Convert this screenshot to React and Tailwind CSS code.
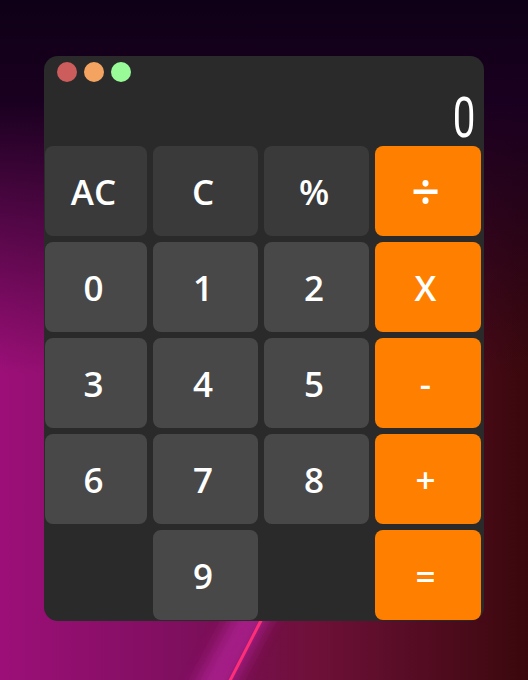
import React from 'react';

const keys = [
  { label: 'AC', kind: 'fn' },
  { label: 'C', kind: 'fn' },
  { label: '%', kind: 'fn' },
  { label: '÷', kind: 'op', big: true },
  { label: '0', kind: 'num' },
  { label: '1', kind: 'num' },
  { label: '2', kind: 'num' },
  { label: 'X', kind: 'op' },
  { label: '3', kind: 'num' },
  { label: '4', kind: 'num' },
  { label: '5', kind: 'num' },
  { label: '-', kind: 'op' },
  { label: '6', kind: 'num' },
  { label: '7', kind: 'num' },
  { label: '8', kind: 'num' },
  { label: '+', kind: 'op' },
  { label: '', kind: 'empty' },
  { label: '9', kind: 'num' },
  { label: '', kind: 'empty' },
  { label: '=', kind: 'op' },
];

const keyStyles = {
  fn: 'bg-[#3a3a3a] rounded-[8px]',
  num: 'bg-[#484848] rounded-[8px]',
  op: 'bg-[#ff8000] rounded-[8px]',
  empty: '',
};

const Key = ({ label, kind, big }) => {
  if (kind === 'empty') return <div />;
  return (
    <button
      className={`${keyStyles[kind]} ${big ? 'text-[50px]' : 'text-[35px]'} flex items-center justify-center pr-[5px] text-white font-semibold leading-none`}
    >
      {label}
    </button>
  );
};

const Swoosh = () => (
  <svg className="absolute left-0 top-0" width="528" height="680" viewBox="0 0 528 680">
    <defs>
      <filter id="blur" x="-50%" y="-50%" width="200%" height="200%">
        <feGaussianBlur stdDeviation="8" />
      </filter>
    </defs>
    <path d="M 288 545 Q 252 615 206 700" stroke="#b4229a" strokeWidth="34" fill="none" opacity="0.75" filter="url(#blur)" />
    <path d="M 300 545 Q 264 615 220 700" stroke="#ff2e78" strokeWidth="3" fill="none" />
  </svg>
);

export default function App() {
  return (
    <div
      className="relative w-[528px] h-[680px] overflow-hidden bg-[linear-gradient(180deg,#0e0016_0%,#1a0020_15%,rgba(20,0,25,0)_55%),linear-gradient(90deg,#9c0f78_0%,#7e0f5e_35%,#6e1038_60%,#3a080c_100%)]"
      style={{ fontFamily: '"Open Sans", "Noto Sans", sans-serif' }}
    >
      <Swoosh />
      <div className="relative pt-[56px] pl-[44px]">
        <div className="w-[440px] h-[565px] bg-[#2a2a2a] rounded-[14px] overflow-hidden flex flex-col">
          <div className="flex gap-[7px] pt-[6px] pl-[13px]">
            <span className="w-[20px] h-[20px] rounded-full bg-[#cd5c5c]" />
            <span className="w-[20px] h-[20px] rounded-full bg-[#f4a460]" />
            <span className="w-[20px] h-[20px] rounded-full bg-[#98fb98]" />
          </div>
          <div className="h-[64px] flex items-end justify-end pr-[9px] pb-[6px]">
            <span
              className="text-white text-[56px] font-normal leading-[44px] scale-x-[0.72] origin-right"
              style={{ fontFamily: 'Roboto, sans-serif' }}
            >
              0
            </span>
          </div>
          <div className="grid grid-cols-[102px_105px_105px_106px] grid-rows-[repeat(5,90px)] gap-[6px] pl-[1px]">
            {keys.map((k, i) => (
              <Key key={i} {...k} />
            ))}
          </div>
        </div>
      </div>
    </div>
  );
}
